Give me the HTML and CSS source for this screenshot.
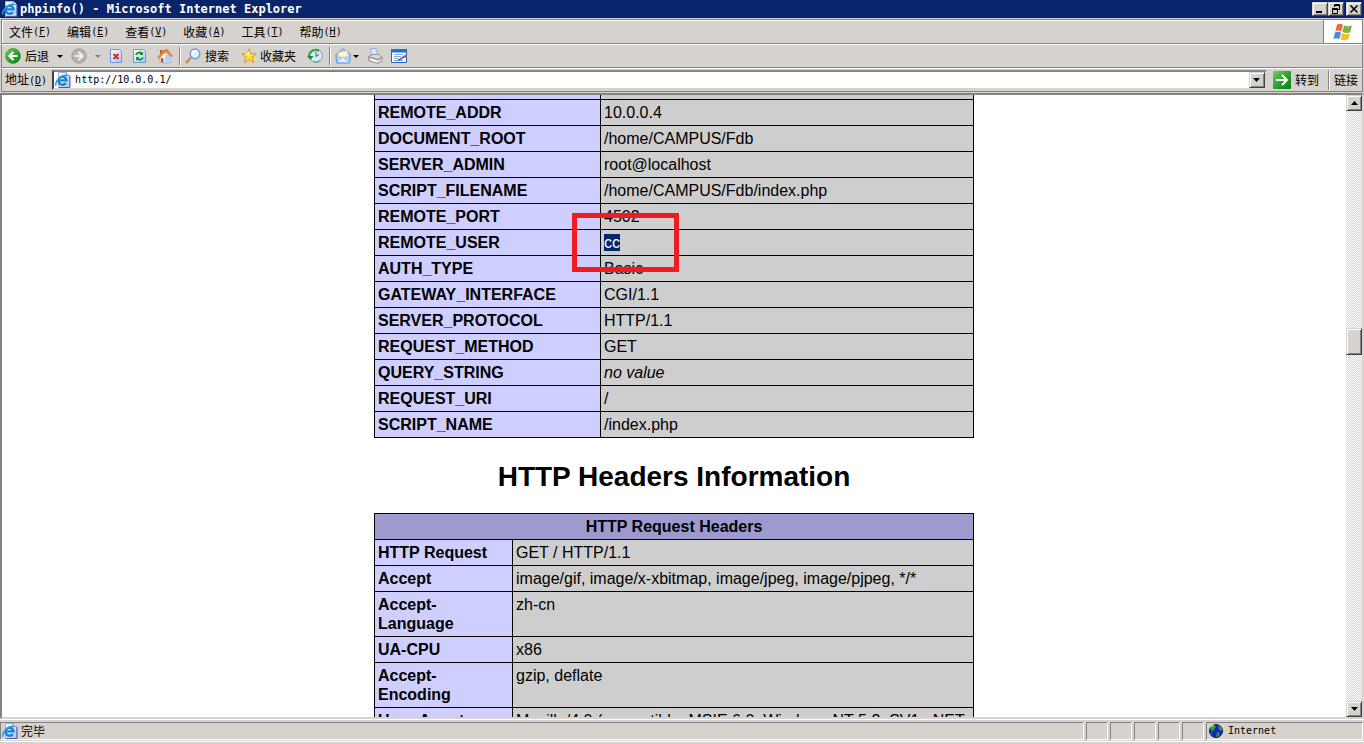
FILE: index.html
```html
<!DOCTYPE html>
<html lang="zh-CN">
<head>
<meta charset="utf-8">
<title>phpinfo()</title>
<link rel="stylesheet" href="styles.css">
</head>
<body>
<svg class="defs" width="0" height="0" aria-hidden="true">
  <defs>
    <linearGradient id="green" x1="0" y1="0" x2="1" y2="1"><stop offset="0" stop-color="#7ad060"/><stop offset=".5" stop-color="#2ca52c"/><stop offset="1" stop-color="#0d7d14"/></linearGradient>
    <linearGradient id="paper" x1="0" y1="0" x2="1" y2="1"><stop offset="0" stop-color="#fff"/><stop offset="1" stop-color="#a9c6f4"/></linearGradient>
    <symbol id="ie" viewBox="0 0 16 16">
      <path d="M3.500 .5h8l3 3v12h-11z" fill="url(#paper)" stroke="#9fb2dc"/>
      <path d="M15 4v11.500H4" fill="none" stroke="#54599a"/>
      <path d="M11.500 .5v3h3" fill="#fff" stroke="#7d8fc4"/>
      <path d="M10.800 11a4 4 0 1 1 .7-2.600H4" fill="none" stroke="#1a80d4" stroke-width="2.400"/>
      <path d="M1.200 13.500C-1 10.500 6 2.500 12 3.400" fill="none" stroke="#2a9ae6" stroke-width="1.500"/>
    </symbol>
  </defs>
</svg>
<div class="window">
  <header class="titlebar">
    <svg class="icon"><use href="#ie"/></svg>
    <h1 class="title">phpinfo() - Microsoft Internet Explorer</h1>
    <div class="winbuttons">
      <button class="raised" aria-label="最小化"><svg width="12" height="10"><path d="M2 8h6" stroke="#000" stroke-width="2"/></svg></button>
      <button class="raised" aria-label="还原"><svg width="12" height="10" fill="none" stroke="#000"><path d="M4.500 3V.5h5v5H8M4 1.500h6M2.500 4.500h5v5h-5zM2 5.500h6"/></svg></button>
      <button class="raised close" aria-label="关闭"><svg width="12" height="10"><path d="M2.500 1.500l7 7M9.500 1.500l-7 7" stroke="#000" stroke-width="1.600"/></svg></button>
    </div>
  </header>

  <div class="menubar">
    <nav class="menus">
      <button>文件<span class="key">(<u>F</u>)</span></button>
      <button>编辑<span class="key">(<u>E</u>)</span></button>
      <button>查看<span class="key">(<u>V</u>)</span></button>
      <button>收藏<span class="key">(<u>A</u>)</span></button>
      <button>工具<span class="key">(<u>T</u>)</span></button>
      <button>帮助<span class="key">(<u>H</u>)</span></button>
    </nav>
    <div class="logo">
      <svg width="20" height="18" viewBox="0 0 20 18">
        <path d="M4 1.500c2-1.300 4-1 6 .2L8.300 8.500c-2-1.200-4-1.200-6-.1z" fill="#ed6a35"/>
        <path d="M11 2.200c2.500 1.200 5 1.300 8 .3l-1.800 6.800c-2.600 1-5.200.8-7.800-.4z" fill="#76b843"/>
        <path d="M2 9.500c2-1.200 4-1.100 6 .1l-1.700 6.600c-2-1.100-4-1.200-6 0z" fill="#4a8be0"/>
        <path d="M9.100 10c2.600 1.200 5.200 1.400 7.800.4l-1.700 6.200c-2.600 1.200-5.400.9-7.800-.2z" fill="#f5c02c"/>
      </svg>
    </div>
  </div>

  <div class="toolbar">
    <button class="tool"><svg class="icon"><circle cx="8" cy="8" r="7.500" fill="url(#green)" stroke="#2f8f2a" stroke-width=".6"/><path d="M8.500 4L4.500 8l4 4M5 8h7.500" fill="none" stroke="#fff" stroke-width="2.200"/></svg>后退</button>
    <button class="tool" aria-label="后退列表"><svg width="6" height="3"><path d="M0 0h6L3 3z"/></svg></button>
    <button class="tool" aria-label="前进"><svg class="icon"><circle cx="8" cy="8" r="7.200" fill="#b4b4b0" stroke="#8e8e8a" stroke-width=".7"/><path d="M7.500 4l4 4-4 4M11 8H3.500" fill="none" stroke="#f0f0ee" stroke-width="2.200"/></svg></button>
    <button class="tool" aria-label="前进列表"><svg width="6" height="3"><path d="M0 0h6L3 3z" fill="#848284"/></svg></button>
    <button class="tool" aria-label="停止"><svg class="icon"><path d="M1.500 1.500h9l2 2v11h-11z" fill="url(#paper)" stroke="#6a96dc"/><path d="M4.500 6l5 5M9.500 6l-5 5" stroke="#e02814" stroke-width="2"/></svg></button>
    <button class="tool" aria-label="刷新"><svg class="icon"><path d="M.5 1.500h10l2 2v11H.5z" fill="url(#paper)" stroke="#6a96dc"/><path d="M3 7c1-3 4-3 5.500-1.500M10 9.500c-1 2.500-4 3-5.500 1" fill="none" stroke="#109020" stroke-width="1.800"/><path d="M6.500 7H10V3.500zM6.500 9H3v4z" fill="#109020"/></svg></button>
    <button class="tool" aria-label="主页"><svg class="icon"><path d="M3 8l5-4 6 4v6l-6 1.500L3 14z" fill="#f3f6ff" stroke="#8ba6d4" stroke-width=".8"/><path d="M8 8l3-4.500L15 8v5.500L8 15.500z" fill="#b9d0f4"/><path d="M3 2h2.500v4H3z" fill="#b75b34"/><path d="M.8 9.500L6 2.500 10 1l5.500 7-1 1L9 3.500 2 10.500z" fill="#f08a28" stroke="#d06a1c" stroke-width=".5"/><path d="M4 10h2.500v5L4 14z" fill="#b8642c"/></svg></button>
    <span class="sep"></span>
    <button class="tool wide"><svg class="icon"><path d="M1 15l5-5.500" stroke="#c98650" stroke-width="2.500"/><circle cx="10" cy="5.800" r="4.800" fill="#dcf2ff" stroke="#7294d8" stroke-width="1.300"/><path d="M7.500 6c0-2 1-3 3-3" fill="none" stroke="#fff" stroke-width="1.500"/></svg>搜索</button>
    <button class="tool wide"><svg class="icon"><path d="M8 .8l1.900 5h5.400l-4.200 3.400 1.700 5.600L8 11.600l-4.800 3.200 1.700-5.600L.7 5.800h5.400z" fill="#ffdf3c" stroke="#d99a20"/><path d="M8 3l1 4H4z" fill="#fff7a8"/></svg>收藏夹</button>
    <button class="tool" aria-label="历史"><svg class="icon"><circle cx="9" cy="8" r="6.500" fill="#d7eaf2" stroke="#7c9db2"/><path d="M2 9c0-6 6-8.500 10-6" fill="none" stroke="#37a448" stroke-width="2.200"/><path d="M0 8h6.500L3.500 12z" fill="#158c2c"/><path d="M9 4v4.500l3-2" fill="none" stroke="#3a5a8c"/><path d="M6 13c2 1.500 5 1 7-1" fill="none" stroke="#56b05c"/></svg></button>
    <span class="sep"></span>
    <button class="tool mail" aria-label="邮件"><svg class="icon"><path d="M1 6.500L8 .8l7.500 5.700-1 8.500H1.500z" fill="#b5d2f8" stroke="#668fd0"/><path d="M3 4.500l9-2 1.500 5-5.500 3-5-3z" fill="#fff6dc" stroke="#d8a860" stroke-width=".6"/><path d="M1.500 14.500L8 9l6.500 5.500z" fill="#e4f1ff" stroke="#86aee4" stroke-width=".8"/></svg><svg width="6" height="3"><path d="M0 0h6L3 3z"/></svg></button>
    <button class="tool" aria-label="打印"><svg class="icon"><path d="M3 1l6-.5 2 7H5z" fill="#d9e9ff" stroke="#7ea3dc" stroke-width=".8"/><path d="M1.500 8.500L5 6.500h7l3 3v3.500l-4 2.500-9.500-3z" fill="#dcdcda" stroke="#858585" stroke-width=".8"/><path d="M2 9l9 2.500 4-2" fill="none" stroke="#777"/><path d="M4 11.500l6 2" stroke="#fff" stroke-width="1.500"/></svg></button>
    <button class="tool" aria-label="编辑"><svg class="icon"><path d="M.5 1.500h15v13H.5z" fill="#f4faff" stroke="#1c64cc"/><path d="M0 1h16v3.500H0z" fill="#1c72dc"/><path d="M3 6.500h9M3 8.500h7M3 10.500h4M3 12.500h9" stroke="#8ca8c8"/><path d="M7 12.500l6.500-4" stroke="#3c74bc" stroke-width="2"/><path d="M13 9l2.500-1.500" stroke="#d84c28" stroke-width="2.500"/></svg></button>
  </div>

  <form class="addressbar">
    <label for="address">地址<span class="key">(<u>D</u>)</span></label>
    <div class="field">
      <svg class="icon"><use href="#ie"/></svg>
      <input id="address" type="text" value="http://10.0.0.1/">
      <button type="button" class="raised drop" aria-label="地址列表"><svg width="7" height="4"><path d="M0 0h7L3.500 4z"/></svg></button>
    </div>
    <button type="button" class="go"><svg width="18" height="18"><rect width="18" height="18" rx="1" fill="url(#green)"/><path d="M9 4l5 5-5 5M3 9h10" fill="none" stroke="#fff" stroke-width="2"/></svg>转到</button>
    <button type="button" class="links">链接</button>
  </form>

  <div class="view">
    <main class="page">
      <table class="info vars">
        <tbody>
          <tr class="cut"><th></th><td></td></tr>
          <tr><th scope="row">REMOTE_ADDR</th><td>10.0.0.4</td></tr>
          <tr><th scope="row">DOCUMENT_ROOT</th><td>/home/CAMPUS/Fdb</td></tr>
          <tr><th scope="row">SERVER_ADMIN</th><td>root@localhost</td></tr>
          <tr><th scope="row">SCRIPT_FILENAME</th><td>/home/CAMPUS/Fdb/index.php</td></tr>
          <tr><th scope="row">REMOTE_PORT</th><td>4502</td></tr>
          <tr><th scope="row">REMOTE_USER</th><td class="marked"><span class="selected">cc</span><span class="frame"></span></td></tr>
          <tr><th scope="row">AUTH_TYPE</th><td>Basic</td></tr>
          <tr><th scope="row">GATEWAY_INTERFACE</th><td>CGI/1.1</td></tr>
          <tr><th scope="row">SERVER_PROTOCOL</th><td>HTTP/1.1</td></tr>
          <tr><th scope="row">REQUEST_METHOD</th><td>GET</td></tr>
          <tr><th scope="row">QUERY_STRING</th><td><i>no value</i></td></tr>
          <tr><th scope="row">REQUEST_URI</th><td>/</td></tr>
          <tr><th scope="row">SCRIPT_NAME</th><td>/index.php</td></tr>
        </tbody>
      </table>
      <h2>HTTP Headers Information</h2>
      <table class="info headers">
        <thead><tr><th colspan="2">HTTP Request Headers</th></tr></thead>
        <tbody>
          <tr><th scope="row">HTTP Request</th><td>GET / HTTP/1.1</td></tr>
          <tr><th scope="row">Accept</th><td>image/gif, image/x-xbitmap, image/jpeg, image/pjpeg, */*</td></tr>
          <tr><th scope="row">Accept-<br>Language</th><td>zh-cn</td></tr>
          <tr><th scope="row">UA-CPU</th><td>x86</td></tr>
          <tr><th scope="row">Accept-<br>Encoding</th><td>gzip, deflate</td></tr>
          <tr><th scope="row">User-Agent</th><td>Mozilla/4.0 (compatible; MSIE 6.0; Windows NT 5.2; SV1; .NET</td></tr>
        </tbody>
      </table>
    </main>
    <div class="scrollbar">
      <button class="raised" aria-label="向上"><svg width="7" height="4"><path d="M0 4h7L3.500 0z"/></svg></button>
      <span class="before"></span>
      <span class="raised thumb"></span>
      <span class="after"></span>
      <button class="raised" aria-label="向下"><svg width="7" height="4"><path d="M0 0h7L3.500 4z"/></svg></button>
    </div>
  </div>

  <footer class="statusbar">
    <div class="panel message"><svg class="icon"><use href="#ie"/></svg>完毕</div>
    <div class="panel small"></div>
    <div class="panel small"></div>
    <div class="panel small"></div>
    <div class="panel small"></div>
    <div class="panel small"></div>
    <div class="panel zone"><svg width="14" height="14"><circle cx="7" cy="7" r="6.500" fill="#1420c8" stroke="#10204c"/><path d="M1 4l4-3 2 2-2 3-2 2zM9 1l4 3v3l-3-1zM8 8l3 1-1 3-3 1zM1 8l2 1 1 3z" fill="#22a428"/><path d="M2 3l3-2" stroke="#d8e8d8"/></svg><span class="key">Internet</span></div>
  </footer>
</div>
</body>
</html>
```

FILE: styles.css
```css
* { box-sizing: border-box; }

body {
  margin: 0;
  background: #d6d3ce;
  color: #000;
  font: 12px/16px "Noto Sans CJK SC", sans-serif;
}

button {
  padding: 0;
  border: 0;
  background: none;
  color: inherit;
  font: inherit;
  display: flex;
  align-items: center;
}

svg { display: block; flex: none; }
.defs { position: absolute; }
.icon { width: 16px; height: 16px; }
.key { font: 10px/16px "DejaVu Sans Mono", monospace; }

.window {
  display: flex;
  flex-direction: column;
  height: 100vh;
}

.raised {
  justify-content: center;
  background: #d6d3ce;
  border: 1px solid;
  border-color: #d6d3ce #424142 #424142 #d6d3ce;
  box-shadow: inset 1px 1px #fff, inset -1px -1px #848284;
}

/* title */
.titlebar {
  display: flex;
  align-items: center;
  gap: 2px;
  height: 18px;
  padding: 0 2px;
  background: #08246b;
  color: #fff;
}
.title {
  flex: 1;
  margin: 0;
  font: bold 12px/18px "DejaVu Sans Mono", monospace;
}
.winbuttons { display: flex; }
.winbuttons button { width: 16px; height: 14px; }
.winbuttons .close { margin-left: 2px; }

/* menus */
.menubar {
  display: flex;
  height: 25px;
  margin: 1px 1px 0;
  border: 1px solid #848284;
  box-shadow: inset 1px 1px #fff;
}
.menus {
  flex: 1;
  display: flex;
  gap: 16px;
  padding-left: 7px;
}
.logo {
  display: flex;
  align-items: center;
  justify-content: center;
  width: 39px;
  border-left: 1px solid #848284;
  background: #fff;
}

/* tools */
.toolbar {
  display: flex;
  align-items: center;
  gap: 8px;
  height: 24px;
  margin: 0 1px;
  padding-left: 3px;
  border: 1px solid #848284;
  border-top-color: #fff;
}
.tool { gap: 4px; height: 20px; }
.wide { padding-right: 4px; }
.wide + .wide { gap: 3px; padding-right: 3px; }
.mail { gap: 2px; }
.sep {
  width: 2px;
  height: 18px;
  margin: 0 -4px 0 -2px;
  border-left: 1px solid #848284;
  border-right: 1px solid #fff;
}

/* address */
.addressbar {
  display: flex;
  align-items: center;
  height: 24px;
  margin: 0 1px;
  padding-left: 3px;
  border: 1px solid #848284;
  border-top-color: #fff;
}
.addressbar label { margin-right: 5px; }
.field {
  flex: 1;
  display: flex;
  align-items: center;
  height: 20px;
  padding-left: 1px;
  background: #fff;
  border: 2px solid;
  border-color: #848284 #d6d3ce #d6d3ce #424142;
}
.field input {
  flex: 1;
  min-width: 0;
  margin: 0;
  padding: 0 0 0 4px;
  border: 0;
  outline: 0;
  background: none;
  font: 10px/16px "DejaVu Sans Mono", monospace;
}
.drop { width: 16px; height: 16px; }
.go {
  gap: 4px;
  margin-left: 6px;
  padding-right: 9px;
  border-right: 1px solid #848284;
  height: 20px;
}
.links {
  height: 20px;
  padding: 0 4px;
  border-left: 1px solid #fff;
}

/* document */
.view {
  flex: 1;
  display: flex;
  min-height: 0;
  margin-top: 1px;
  background: #fff;
  border: 2px solid;
  border-color: #848284 #d6d3ce #d6d3ce #848284;
}
.page {
  flex: 1;
  overflow: hidden;
  font: 16px/19px "Liberation Sans", Arial, sans-serif;
}
.info {
  width: 600px;
  margin: 0 auto;
  border-collapse: collapse;
  table-layout: fixed;
}
.info th, .info td {
  padding: 3px;
  border: 1px solid #000;
  text-align: left;
  vertical-align: top;
}
.info th { background: #ceceff; }
.info td { background: #cecece; white-space: nowrap; }
.info thead th { background: #9c9ace; text-align: center; }
.info .cut th, .info .cut td { height: 4px; padding: 0; border-top: 0; }
.vars th { width: 226px; }
.headers { table-layout: auto; }
.headers tbody th { width: 138px; }
.page h2 {
  margin: 23px 0 20px;
  text-align: center;
  font-size: 28px;
  line-height: 32px;
}
.selected { background: #08246b; color: #fff; }
.info .marked { position: relative; }
.frame {
  position: absolute;
  top: -17px;
  left: -29px;
  width: 107px;
  height: 59px;
  border: 5px solid #ef1c21;
}

/* scrolling */
.scrollbar {
  display: flex;
  flex-direction: column;
  width: 16px;
  background: repeating-conic-gradient(#fff 0 25%, #d6d3ce 0 50%) 0 0 / 2px 2px;
}
.scrollbar button { height: 16px; }
.before { flex: 218; }
.after { flex: 347; }
.thumb { height: 27px; }

/* status */
.statusbar {
  display: flex;
  gap: 2px;
  height: 25px;
  padding: 2px 1px 4px 0;
  border-top: 1px solid #fff;
  box-shadow: inset 0 -2px #d6d3ce, inset 0 -3px #fff;
}
.panel {
  display: flex;
  align-items: center;
  border: 1px solid;
  border-color: #848284 #fff #fff #848284;
}
.message { flex: 1; gap: 3px; padding-left: 1px; }
.small { width: 22px; }
.zone { width: 157px; gap: 5px; padding-left: 2px; }
```
